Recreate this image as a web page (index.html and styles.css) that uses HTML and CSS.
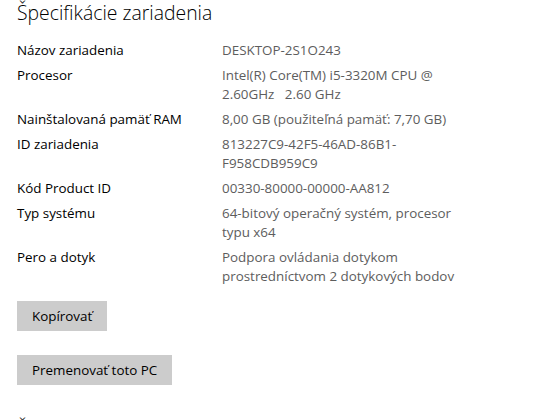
FILE: index.html
```html
<!DOCTYPE html>
<html lang="sk">
<head>
<meta charset="utf-8">
<title>Špecifikácie zariadenia</title>
<link rel="stylesheet" href="styles.css">
</head>
<body>
<main class="page">
  <h2 class="heading">Špecifikácie zariadenia</h2>
  <dl class="specs">
    <dt>Názov zariadenia</dt><dd>DESKTOP-2S1O243</dd>
    <dt>Procesor</dt><dd>Intel(R) Core(TM) i5-3320M CPU @ 2.60GHz&nbsp;&nbsp; 2.60 GHz</dd>
    <dt>Nainštalovaná pamäť RAM</dt><dd>8,00 GB (použiteľná pamäť: 7,70 GB)</dd>
    <dt>ID zariadenia</dt><dd>813227C9-42F5-46AD-86B1-F958CDB959C9</dd>
    <dt>Kód Product ID</dt><dd>00330-80000-00000-AA812</dd>
    <dt>Typ systému</dt><dd>64-bitový operačný systém, procesor typu x64</dd>
    <dt>Pero a dotyk</dt><dd>Podpora ovládania dotykom prostredníctvom 2 dotykových bodov</dd>
  </dl>
  <div class="actions">
    <button class="btn" type="button">Kopírovať</button>
    <button class="btn" type="button">Premenovať toto PC</button>
  </div>
  <h2 class="heading next">Špecifikácie systému Windows</h2>
</main>
</body>
</html>
```
FILE: styles.css
```css
html, body {
  margin: 0;
  padding: 0;
  background: #ffffff;
  overflow: hidden;
}
body {
  font-family: "Open Sans", "Noto Sans", sans-serif;
  color: #000;
}
.page {
  padding: 0 0 0 17px;
}
.heading {
  margin: 0;
  font-size: 19.4px;
  font-weight: 300;
  line-height: 26px;
  color: #000;
}
.specs {
  display: grid;
  grid-template-columns: 205px 240px;
  row-gap: 6px;
  margin: 15px 0 0 0;
  font-size: 13.4px;
  line-height: 19px;
}
.specs dt {
  margin: 0;
  color: #000;
}
.specs dd {
  margin: 0;
  color: #5d5d5d;
}
.actions {
  display: flex;
  flex-direction: column;
  align-items: flex-start;
  gap: 24px;
  margin-top: 15px;
}
.btn {
  font-family: inherit;
  font-size: 13.4px;
  height: 30px;
  padding: 0 15px;
  border: 0;
  background: #cccccc;
  color: #000;
}
.heading.next {
  margin-top: 32px;
}
```
